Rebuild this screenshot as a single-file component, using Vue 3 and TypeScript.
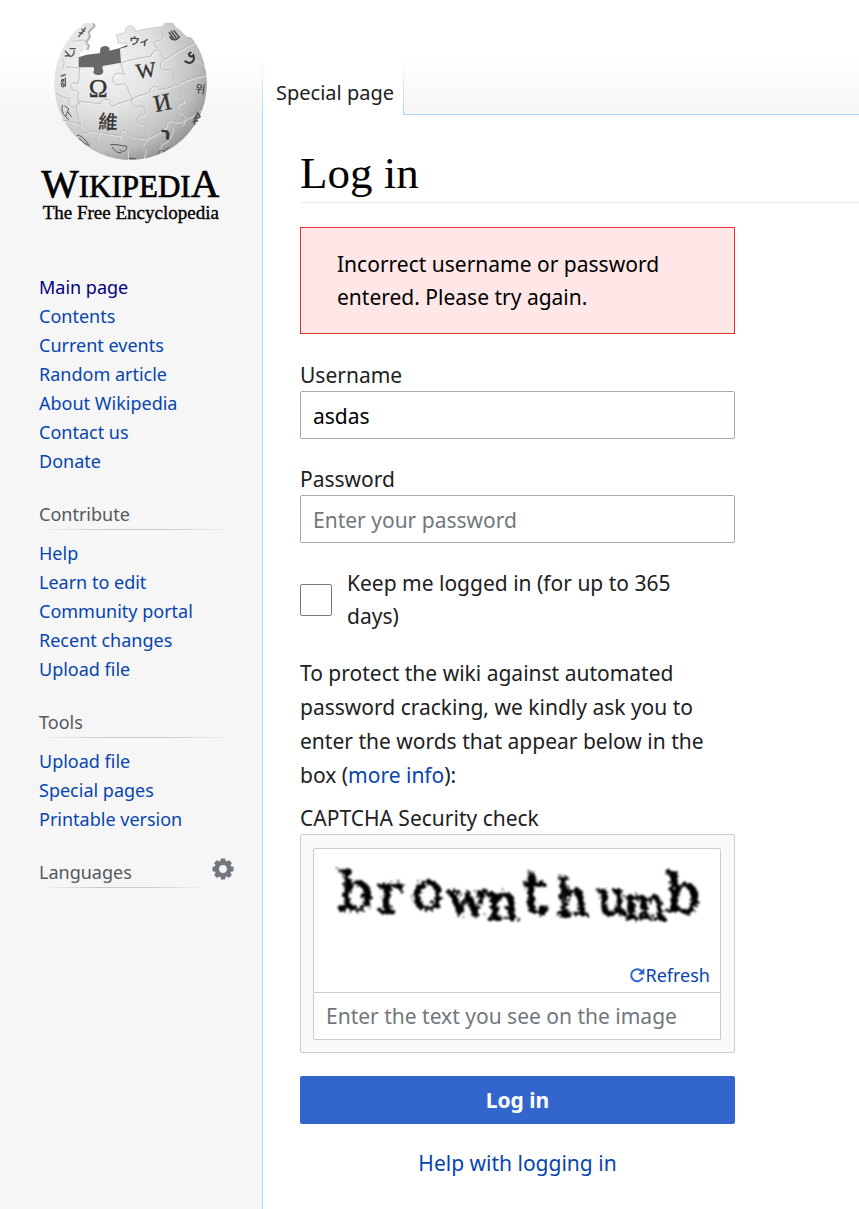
<script setup lang="ts">
import { ref } from 'vue'

interface Portal {
  title: string
  links: string[]
}

interface Letter {
  char: string
  x: number
  y: number
  size: number
}

const mainLinks: string[] = [
  'Main page',
  'Contents',
  'Current events',
  'Random article',
  'About Wikipedia',
  'Contact us',
  'Donate',
]

const portals: Portal[] = [
  {
    title: 'Contribute',
    links: ['Help', 'Learn to edit', 'Community portal', 'Recent changes', 'Upload file'],
  },
  { title: 'Tools', links: ['Upload file', 'Special pages', 'Printable version'] },
]

const seams: string[] = [
  'M150 174 C144 190 150 205 144 222 C132 214 118 222 124 236 C132 246 142 238 146 248 C142 262 144 270 150 284',
  'M78 250 C95 262 110 262 118 268 C112 284 124 296 138 290 C148 284 140 274 150 274 C170 276 190 280 212 280 C216 264 240 264 240 278 C238 292 250 290 262 282 C280 276 295 272 312 266',
  'M273 158 C276 176 280 186 284 194 C266 184 248 192 248 208 C250 226 268 228 284 220 C296 232 296 250 306 266 C300 282 314 298 330 288 C344 284 348 300 344 314 C318 312 314 344 340 344 C350 352 350 366 354 384',
  'M273 158 C300 150 330 144 364 138 C366 118 392 114 396 134 C394 142 404 150 412 144 C430 132 456 118 492 98',
  'M396 70 C404 84 396 92 386 92 C366 94 372 112 386 116',
  'M306 266 C326 256 344 254 360 246 C358 230 380 222 386 238 C396 240 420 232 442 224 C458 214 488 202 526 196',
  'M404 148 C384 158 388 182 408 180 C426 176 430 196 436 220 C454 236 456 256 462 278 C440 276 434 304 454 310 C468 312 464 330 458 346',
  'M97 330 C118 334 140 338 152 344 C144 362 162 378 176 366 C186 358 194 366 208 366 C236 372 254 376 272 376 C266 360 290 356 294 368 C302 382 330 388 354 384',
  'M354 384 C376 376 398 360 412 348 C404 334 426 326 434 336 C452 342 482 320 512 300',
  'M140 290 C140 310 146 328 152 344',
  'M208 366 C204 382 196 392 206 402 C216 414 214 424 222 434',
  'M354 384 C350 396 336 398 340 410 C352 420 344 432 340 446',
  'M272 376 C262 394 282 400 288 410 C296 424 292 436 294 448',
  'M108 172 C124 170 134 174 150 174',
  'M96 178 C104 166 104 156 98 146',
  'M426 348 C432 366 420 384 406 398 C396 398 388 408 392 426',
  'M468 130 C476 140 486 150 498 150 C512 152 516 164 522 170',
  'M126 98 C132 88 140 96 150 92 C158 86 164 94 172 98',
]

/* The word rides on a wave, its letters crowding each other. */
const letters: Letter[] = [
  { char: 'b', x: 22, y: 59, size: 54 },
  { char: 'r', x: 61, y: 61, size: 54 },
  { char: 'o', x: 95, y: 58, size: 54 },
  { char: 'w', x: 131, y: 64, size: 46 },
  { char: 'n', x: 170, y: 68, size: 50 },
  { char: 't', x: 206, y: 62, size: 60 },
  { char: 'h', x: 240, y: 64, size: 50 },
  { char: 'u', x: 280, y: 63, size: 48 },
  { char: 'm', x: 308, y: 68, size: 44 },
  { char: 'b', x: 349, y: 61, size: 54 },
]

const teeth: number[] = [0, 45, 90, 135, 180, 225, 270, 315]

const username = ref<string>('asdas')
const password = ref<string>('')
const remember = ref<boolean>(false)
const captcha = ref<string>('')
</script>

<template>
  <div class="page">
    <aside class="sidebar">
      <a href="#" class="logo" aria-label="Visit the main page">
        <svg viewBox="0 0 600 660" role="img">
          <defs>
            <radialGradient id="ball" cx="0.32" cy="0.3" r="0.78">
              <stop offset="0" stop-color="#f6f6f6" />
              <stop offset="0.45" stop-color="#e2e2e2" />
              <stop offset="0.8" stop-color="#bdbdbd" />
              <stop offset="1" stop-color="#8e8e8e" />
            </radialGradient>
          </defs>
          <path
            d="M118 84 L138 60 L152 50 L162 40 L188 38 L194 48 L176 64 L180 78 L166 98 L176 106 L172 118 L150 128 L146 172 L190 172 L216 168 L273 158 L270 114 L292 108 L292 102 L264 98 L260 74 L286 68 C282 48 304 42 314 54 L316 64 L350 56 L396 50 L404 38 L430 38 L436 50 L446 56 L470 80 L484 82 A229 229 0 1 1 118 84 Z"
            fill="url(#ball)"
          />
          <path
            d="M190 40 L194 48 L176 66 L180 80 L168 98 L177 107 L172 120"
            fill="none"
            stroke="#b0b0b0"
            stroke-width="6"
            stroke-linejoin="round"
          />
          <path
            d="M292 102 L264 98 L260 74 L286 68 C282 48 304 42 314 54 L316 64 L350 56 L396 50"
            fill="none"
            stroke="#cfcfcf"
            stroke-width="3"
          />
          <path
            d="M146 142 L170 134 L208 130 C214 126 206 116 216 110 C230 104 242 112 238 122 L270 114 L292 104 L292 110 L270 116 L273 158 L218 168 C214 176 224 180 218 190 C210 200 190 194 190 186 C192 180 194 178 190 172 L146 172 Z"
            fill="#686868"
          />
          <g fill="none" stroke="#ffffff" stroke-opacity="0.6" stroke-width="3" transform="translate(2 3)">
            <path v-for="(d, i) in seams" :key="i" :d="d" />
          </g>
          <g fill="none" stroke="#b0b0b0" stroke-width="2.4">
            <path v-for="(d, i) in seams" :key="i" :d="d" />
          </g>
          <g class="glyphs" fill="#333" stroke="#333">
            <text x="176" y="262" font-size="76">Ω</text>
            <text x="318" y="202" font-size="64" transform="rotate(-8 348 180)">W</text>
            <text x="371" y="302" font-size="72" transform="rotate(-12 398 278)">И</text>
            <text x="205" y="357" font-size="58" transform="rotate(3 233 337)">維</text>
            <text x="298" y="104" font-size="31" transform="rotate(4 320 90)">ウィ</text>
            <text class="sans" x="392" y="388" font-size="50" transform="rotate(4 408 370)">ר</text>
            <text x="496" y="250" font-size="34" stroke="none" transform="rotate(8 510 230)">위</text>
          </g>
          <g fill="none" stroke="#555" stroke-width="4" stroke-linecap="round">
            <path d="M418 68 L432 88 M424 64 L440 86 M432 62 L446 80 M420 80 C424 92 440 92 448 80" stroke-width="5" />
            <path d="M482 128 C470 132 482 146 490 136 C496 152 484 166 466 154" stroke="#333" stroke-width="6" />
            <path d="M146 80 L166 54 M148 68 L158 70 M156 58 L164 64" />
            <path d="M106 124 L118 136 L106 138 M116 136 C124 144 134 134 132 122 M120 116 L136 116" />
            <path d="M94 198 L106 194 M94 214 C98 202 106 210 94 222 C96 236 106 230 100 222 M106 204 L106 228" />
            <path d="M98 286 C90 300 102 318 116 328 M104 288 L116 296 L108 318 M114 306 L124 320" stroke-width="3" />
            <path d="M142 376 C150 372 170 392 178 408 M148 386 C156 388 160 402 172 404" stroke-width="3" />
            <path d="M242 404 C254 400 272 408 288 408 C296 420 280 430 270 420 M248 412 C254 424 264 430 274 428" stroke-width="3" />
            <path d="M494 342 C488 328 500 318 504 308 M496 326 L508 322 M490 336 L502 332 M504 310 L510 320" stroke-width="5" />
            <path d="M384 428 L396 420 L402 424 L416 412 M298 444 L316 446" stroke-width="3" />
          </g>
          <g class="wordmark" fill="#000" stroke="#000">
            <text x="34" y="562" stroke-width="2">
              <tspan font-size="119">W</tspan><tspan font-size="93">IKIPEDI</tspan><tspan font-size="119">A</tspan>
            </text>
            <text x="38" y="627" font-size="57" stroke-width="1">The Free Encyclopedia</text>
          </g>
        </svg>
      </a>

      <nav class="portal" aria-label="Navigation">
        <ul>
          <li v-for="(link, i) in mainLinks" :key="link">
            <a href="#" :class="{ visited: i === 0 }">{{ link }}</a>
          </li>
        </ul>
      </nav>
      <nav v-for="portal in portals" :key="portal.title" class="portal" :aria-label="portal.title">
        <h3>{{ portal.title }}</h3>
        <ul>
          <li v-for="link in portal.links" :key="link">
            <a href="#">{{ link }}</a>
          </li>
        </ul>
      </nav>
      <div class="portal languages">
        <h3>Languages</h3>
        <button type="button" class="gear" aria-label="Language settings">
          <svg viewBox="0 0 22 22">
            <g fill="#72777d">
              <rect
                v-for="angle in teeth"
                :key="angle"
                x="8.6"
                y="0.5"
                width="4.8"
                height="5"
                rx="1"
                :transform="`rotate(${angle} 11 11)`"
              />
            </g>
            <circle cx="11" cy="11" r="6.2" fill="none" stroke="#72777d" stroke-width="4.6" />
          </svg>
        </button>
      </div>
    </aside>

    <div class="column">
      <header class="tabs">
        <a href="#" class="tab">Special page</a>
        <div class="rest"></div>
      </header>

      <main class="content">
        <h1>Log in</h1>

        <form class="login" @submit.prevent>
          <div class="error" role="alert">Incorrect username or password entered. Please try again.</div>

          <div class="field">
            <label for="username">Username</label>
            <input id="username" v-model="username" class="box" type="text" />
          </div>

          <div class="field">
            <label for="password">Password</label>
            <input
              id="password"
              v-model="password"
              class="box"
              type="password"
              placeholder="Enter your password"
            />
          </div>

          <div class="remember">
            <input id="remember" v-model="remember" type="checkbox" />
            <label for="remember">Keep me logged in (for up to 365 days)</label>
          </div>

          <p class="notice">
            To protect the wiki against automated password cracking, we kindly ask you to enter the
            words that appear below in the box (<a href="#">more info</a>):
          </p>

          <label class="captcha-label" for="captcha">CAPTCHA Security check</label>
          <div class="captcha">
            <div class="picture">
              <svg class="word" viewBox="0 0 406 104" role="img" aria-label="CAPTCHA">
                <defs>
                  <filter id="ragged" x="-5%" y="-20%" width="110%" height="140%">
                    <feTurbulence type="turbulence" baseFrequency="0.16" numOctaves="2" seed="4" />
                    <feDisplacementMap in="SourceGraphic" scale="9" />
                    <feGaussianBlur stdDeviation="1" />
                  </filter>
                </defs>
                <text filter="url(#ragged)">
                  <tspan
                    v-for="(letter, i) in letters"
                    :key="i"
                    :x="letter.x"
                    :y="letter.y"
                    :font-size="letter.size"
                    >{{ letter.char }}</tspan
                  >
                </text>
              </svg>
              <a href="#" class="refresh">
                <svg viewBox="0 0 16 16">
                  <path
                    d="M12.6 4.2 A6 6 0 1 0 13.7 10.6"
                    fill="none"
                    stroke="#3366cc"
                    stroke-width="2"
                  />
                  <path d="M15.4 1 V7.4 H9 Z" fill="#3366cc" />
                </svg>
                <span>Refresh</span>
              </a>
            </div>
            <input
              id="captcha"
              v-model="captcha"
              type="text"
              placeholder="Enter the text you see on the image"
            />
          </div>

          <button type="submit" class="submit">Log in</button>
          <a href="#" class="help">Help with logging in</a>
        </form>
      </main>
    </div>
  </div>
</template>

<style>
body {
  margin: 0;
  background: #f6f6f6;
}
</style>

<style scoped>
.page {
  display: grid;
  grid-template-columns: 262px minmax(0, 1fr);
  min-height: 100vh;
  background: linear-gradient(#ffffff 50%, #f6f6f6) 0 0 / 100% 115px no-repeat;
  color: #202122;
  font-family: 'Noto Sans', 'Open Sans', 'Noto Sans CJK SC', sans-serif;
  font-size: 21px;
}

a {
  color: #0645ad;
  text-decoration: none;
}

a:hover {
  text-decoration: underline;
}

.sidebar {
  padding-top: 10px;
}

.logo {
  display: block;
  width: 200px;
  margin: 0 0 43px 30px;
}

.logo svg {
  display: block;
  width: 100%;
}

.glyphs {
  font-family: 'Liberation Serif', 'Noto Sans CJK TC', 'Noto Sans CJK KR', serif;
}

.glyphs .sans {
  font-family: 'DejaVu Sans', sans-serif;
  font-weight: bold;
}

.wordmark {
  font-family: 'Liberation Serif', serif;
}

.portal {
  margin: 0 28px 24px 39px;
  font-size: 18px;
  line-height: 29px;
}

.portal h3 {
  margin: 0;
  padding-bottom: 1px;
  background: linear-gradient(to right, transparent, #c8ccd1 33%, #c8ccd1 66%, transparent) 0 100% /
    100% 1px no-repeat;
  color: #54595d;
  font-size: 18px;
  font-weight: normal;
}

.portal ul {
  margin: 0;
  padding: 0;
  list-style: none;
}

.portal h3 + ul {
  margin-top: 9px;
}

.portal .visited {
  color: #000080;
}

.languages {
  display: flex;
  align-items: flex-start;
  gap: 5px;
}

.languages h3 {
  flex: 1;
}

.gear {
  width: 22px;
  height: 22px;
  padding: 0;
  border: 0;
  background: none;
  cursor: pointer;
}

.gear svg {
  display: block;
}

.column {
  display: flex;
  flex-direction: column;
}

.tabs {
  display: flex;
  height: 115px;
}

.tab {
  box-sizing: border-box;
  padding: 76px 10px 0 14px;
  background:
    linear-gradient(to bottom, #ffffff, #a7d7f9) 0 100% / 1px 58px no-repeat,
    linear-gradient(to bottom, #ffffff, #a7d7f9) 100% 100% / 1px 58px no-repeat,
    #ffffff;
  color: #202122;
  font-size: 20px;
  line-height: 34px;
}

.rest {
  flex: 1;
  border-bottom: 1px solid #a7d7f9;
}

.content {
  flex: 1;
  padding: 30px 0 28px 37px;
  border-left: 1px solid #a7d7f9;
  background: #ffffff;
}

h1 {
  margin: 0 0 24px;
  padding-bottom: 1px;
  border-bottom: 1px solid #eaecf0;
  color: #000000;
  font-family: 'Liberation Serif', serif;
  font-size: 45px;
  font-weight: normal;
  line-height: 56px;
}

.login {
  display: flex;
  flex-direction: column;
  max-width: 435px;
}

.error {
  padding: 20px 36px 19px;
  border: 1px solid #dd3333;
  background: #fee7e6;
  color: #000000;
  line-height: 33px;
}

.field {
  display: flex;
  flex-direction: column;
  margin-top: 24px;
}

.error + .field {
  margin-top: 25px;
}

.field label,
.captcha-label {
  line-height: 32px;
}

.box {
  box-sizing: border-box;
  width: 100%;
  height: 48px;
  padding: 1px 12px 0;
  border: 1px solid #a2a9b1;
  border-radius: 2px;
  background: #ffffff;
  color: #000000;
  font: inherit;
}

input::placeholder {
  color: #72777d;
  opacity: 1;
}

.remember {
  display: flex;
  align-items: center;
  gap: 15px;
  margin-top: 24px;
  padding-right: 24px;
  line-height: 33px;
}

.remember input {
  flex: none;
  width: 32px;
  height: 32px;
  margin: 0;
  border: 1px solid #72777d;
  border-radius: 2px;
  background: #ffffff;
  appearance: none;
}

.remember input:checked {
  background: #3366cc;
}

.notice {
  margin: 23px 0 10px;
  line-height: 34px;
}

.captcha {
  display: flex;
  flex-direction: column;
  padding: 13px 13px 12px 12px;
  border: 1px solid #c8ccd1;
  border-radius: 2px;
  background: #f8f9fa;
}

.picture {
  display: flex;
  flex-direction: column;
  height: 143px;
  border: 1px solid #c8ccd1;
  border-radius: 2px 2px 0 0;
  background: #ffffff;
}

.word {
  display: block;
  width: 100%;
  fill: #000000;
  font-family: 'DejaVu Serif', serif;
  stroke: #000000;
  stroke-width: 2;
}

.refresh {
  display: flex;
  align-items: center;
  align-self: flex-end;
  margin: auto 10px 3px 0;
  font-size: 18px;
  line-height: 28px;
}

.refresh svg {
  width: 16px;
  height: 16px;
}

.captcha input {
  box-sizing: border-box;
  height: 47px;
  padding: 0 12px;
  border: 1px solid #c8ccd1;
  border-top: 0;
  border-radius: 0 0 2px 2px;
  background: #ffffff;
  font: inherit;
}

.submit {
  height: 48px;
  margin-top: 23px;
  border: 0;
  border-radius: 2px;
  background: #3366cc;
  color: #ffffff;
  font: inherit;
  font-weight: bold;
  cursor: pointer;
}

.help {
  align-self: center;
  margin-top: 22px;
  line-height: 34px;
}
</style>
